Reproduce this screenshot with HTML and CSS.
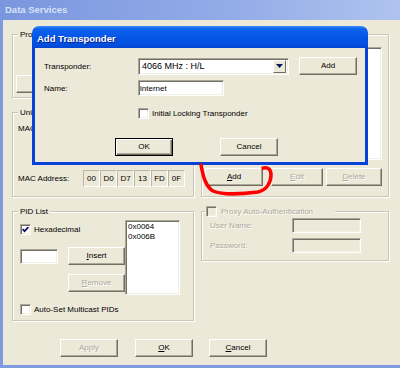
FILE: index.html
```html
<!DOCTYPE html>
<html lang="en">
<head>
  <meta charset="UTF-8">
  <title>Data Services</title>
  <link rel="stylesheet" href="styles.css">
</head>
<body>

<div class="window">
  <div class="titlebar">Data Services</div>

  <div class="frame">
    <div class="groups">
      <div class="col">
        <!-- Proxy server -->
        <div class="group group-proxy">
          <div class="group-title">Proxy</div>
          <button class="btn btn-settings"></button>
        </div>

        <!-- Unicast -->
        <div class="group group-unicast">
          <div class="group-title">Unicast</div>
          <div class="mac-mode">MAC Filter:</div>
          <div class="mac-row">
            <span class="mac-label">MAC Address:</span>
            <div class="mac">
              <span>00</span><span>D0</span><span>D7</span><span>13</span><span>FD</span><span>0F</span>
            </div>
          </div>
        </div>
      </div>

      <!-- Transponder list -->
      <div class="group group-multicast">
        <div class="group-title">Transponders</div>
        <div class="listbox list-tp"></div>
        <div class="btn-row">
          <button class="btn btn-add"><u>A</u>dd</button>
          <button class="btn btn-edit" disabled><u>E</u>dit</button>
          <button class="btn btn-delete" disabled><u>D</u>elete</button>
        </div>
      </div>

      <!-- PID list -->
      <div class="group group-pid">
        <div class="group-title">PID List</div>
        <div class="pid-main">
          <div class="pid-left">
            <div class="check-row hex-row">
              <span class="check checked">
                <svg width="7" height="7" viewBox="0 0 7 7"><path d="M0.6 3.2 L2.6 5.2 L6.4 1.2" stroke="#12125e" stroke-width="1.7" fill="none"/></svg>
              </span>
              <span class="check-text">Hexadecimal</span>
            </div>
            <div class="insert-row">
              <input class="edit pid-edit" type="text" value="">
              <button class="btn btn-insert"><u>I</u>nsert</button>
            </div>
            <button class="btn btn-remove" disabled><u>R</u>emove</button>
          </div>
          <div class="listbox list-pid">
            <div>0x0064</div>
            <div>0x006B</div>
          </div>
        </div>
        <div class="check-row auto-row">
          <span class="check"></span>
          <span class="check-text">Auto-Set Multicast PIDs</span>
        </div>
      </div>

      <!-- Proxy auth -->
      <div class="group group-auth">
        <div class="auth-title">
          <span class="check disabled"></span>
          <span class="muted">Proxy Auto-Authentication</span>
        </div>
        <div class="auth-row auth-user">
          <span class="auth-label muted">User Name:</span>
          <span class="edit edit-off"></span>
        </div>
        <div class="auth-row auth-pass">
          <span class="auth-label muted">Password:</span>
          <span class="edit edit-off"></span>
        </div>
      </div>
    </div>

    <div class="footer">
      <button class="btn" disabled>Apply</button>
      <button class="btn btn-ok"><u>O</u>K</button>
      <button class="btn btn-cancel"><u>C</u>ancel</button>
    </div>
  </div>

  <!-- Modal dialog -->
  <div class="dialog">
    <div class="dialog-title">Add Transponder</div>
    <div class="dialog-body">
      <div class="field">
        <span class="field-label">Transponder:</span>
        <div class="combo">
          <span class="combo-text">4066 MHz : H/L</span>
          <span class="combo-arrow">
            <svg width="7" height="4" viewBox="0 0 7 4"><path d="M0 0 H7 L3.5 4 Z" fill="#0b1a5a"/></svg>
          </span>
        </div>
        <button class="btn btn-tp-add">Add</button>
      </div>
      <div class="field field-name">
        <span class="field-label">Name:</span>
        <input class="edit name-edit" type="text" value="internet">
      </div>
      <div class="field field-check">
        <span class="field-label"></span>
        <span class="check"></span>
        <span class="check-text">Initial Locking Transponder</span>
      </div>
      <div class="dialog-buttons">
        <button class="btn btn-default">OK</button>
        <button class="btn btn-dlg-cancel">Cancel</button>
      </div>
    </div>
  </div>

  <!-- red pen mark -->
  <svg class="scribble" width="400" height="368" viewBox="0 0 400 368">
    <path d="M201 165 C203 175 205 186 213 191 C222 195 243 194 258 192 C267 190 271 182 271 175 C271 169 268 167 263 168" stroke="#ff0000" stroke-width="3.5" fill="none" stroke-linecap="round"/>
  </svg>
</div>

</body>
</html>
```

FILE: styles.css
```css
/* base */
* {
  box-sizing: border-box;
}
body {
  margin: 0;
  font-family: "Liberation Sans", Arial, sans-serif;
  font-size: 8px;
  color: #000;
  background: #ece9d8;
}
button, input {
  font: inherit;
  color: inherit;
}

/* outer window */
.window {
  position: relative;
  width: 400px;
  height: 368px;
  overflow: hidden;
  background: #ece9d8;
}
.titlebar {
  height: 20px;
  padding: 4px 0 0 5px;
  line-height: 12px;
  font-size: 9.5px;
  font-weight: bold;
  color: #d8e2f7;
  background: linear-gradient(to right, #7a96de, #94ade8 60%, #b0c3ef);
}
.frame {
  height: 348px;
  border-left: 3px solid #7f9be0;
  border-bottom: 3px solid #7f9be0;
  padding: 14px 0 0 9px;
}

/* group boxes */
.groups {
  display: grid;
  grid-template-columns: 182px 188px;
  column-gap: 7px;
  row-gap: 14px;
  align-items: start;
}
.col {
  display: flex;
  flex-direction: column;
  gap: 14px;
}
.group {
  border: 1px solid #c9c6b5;
  box-shadow: inset 1px 1px 0 #fff, 1px 1px 0 #fff;
}
.group-title {
  width: fit-content;
  height: 11px;
  line-height: 11px;
  margin: -6px 0 0 5px;
  padding: 0 2px;
  background: #ece9d8;
}
.group-proxy { height: 64px; }
.group-unicast { height: 85px; }
.group-multicast { height: 163px; }
.group-pid { height: 110px; }
.group-auth { height: 50px; }

/* buttons, classic look */
.btn {
  width: 58px;
  height: 18px;
  padding: 0;
  background: #ece9d8;
  border: 1px solid;
  border-color: #fff #716f64 #716f64 #fff;
  box-shadow: inset -1px -1px 0 #aca899;
  line-height: 14px;
}
.btn:disabled {
  color: #aca899;
  text-shadow: 1px 1px 0 #fff;
}
.btn-default {
  border-color: #000;
  box-shadow: inset 1px 1px 0 #fff, inset -1px -1px 0 #716f64, inset -2px -2px 0 #aca899;
}

/* edits, lists, checks */
.edit, .listbox, .combo, .check {
  display: block;
  background: #fff;
  border: 1px solid;
  border-color: #aca899 #fff #fff #aca899;
  box-shadow: inset 1px 1px 0 #716f64, inset -1px -1px 0 #f1efe2;
}
.edit {
  padding: 0 0 0 1px;
  outline: none;
}
.edit-off {
  background: #ece9d8;
}
.check {
  width: 11px;
  height: 11px;
  flex: none;
  display: flex;
  align-items: center;
  justify-content: center;
}
.check.disabled {
  background: #ece9d8;
}
.check-row {
  display: flex;
  align-items: center;
  height: 11px;
}
.check-text {
  margin-left: 3px;
}
.muted {
  color: #aca899;
  text-shadow: 1px 1px 0 #fff;
}

/* proxy server */
.btn-settings {
  width: 75px;
  margin: 35px 0 0 3px;
}

/* unicast */
.mac-mode {
  margin: 5px 0 0 5px;
  line-height: 11px;
}
.mac-row {
  display: flex;
  align-items: center;
  margin: 36px 0 0 5px;
}
.mac-label {
  width: 65px;
}
.mac {
  display: flex;
}
.mac span {
  width: 17px;
  height: 17px;
  line-height: 15px;
  text-align: center;
  border: 1px solid;
  border-color: #b9b6a6 #fff #fff #b9b6a6;
}

/* transponder list */
.list-tp {
  width: 175px;
  height: 113px;
  margin: 7px 0 0 5px;
}
.btn-row {
  display: flex;
  margin-top: 8px;
}
.btn-add { margin-left: 3px; }
.btn-edit { margin-left: 8px; width: 52px; }
.btn-delete { margin-left: 3px; width: 56px; }

/* pid list */
.pid-main {
  display: flex;
  margin-top: 3px;
}
.pid-left {
  width: 112px;
  padding-left: 7px;
}
.hex-row {
  margin-top: 4px;
}
.insert-row {
  display: flex;
  align-items: center;
  margin-top: 12px;
  height: 18px;
}
.pid-edit {
  width: 38px;
  height: 15px;
}
.btn-insert {
  width: 57px;
  margin-left: 10px;
}
.btn-remove {
  display: block;
  width: 57px;
  margin: 9px 0 0 48px;
}
.list-pid {
  width: 55px;
  height: 75px;
  padding: 1px 0 0 2px;
  line-height: 10px;
}
.auto-row {
  margin: 9px 0 0 7px;
}

/* proxy authentication */
.auth-title {
  display: flex;
  align-items: center;
  width: 130px;
  height: 11px;
  margin: -6px 0 0 3px;
  padding-left: 1px;
  background: #ece9d8;
}
.auth-title .muted {
  margin-left: 4px;
}
.auth-row {
  display: flex;
  align-items: center;
  height: 15px;
  padding-left: 8px;
}
.auth-user { margin-top: 1px; }
.auth-pass { margin-top: 5px; }
.auth-label {
  width: 82px;
}
.auth-row .edit {
  width: 69px;
  height: 15px;
}

/* bottom buttons */
.footer {
  display: flex;
  margin: 18px 0 0 48px;
}
.btn-ok { margin-left: 17px; }
.btn-cancel { margin-left: 16px; }

/* add transponder dialog */
.dialog {
  position: absolute;
  left: 32px;
  top: 26px;
  width: 336px;
  height: 139px;
}
.dialog-title {
  height: 22px;
  padding: 7px 0 0 5px;
  line-height: 12px;
  font-size: 9.5px;
  font-weight: bold;
  color: #fff;
  text-shadow: 1px 1px 0 #0a1f8a;
  border-radius: 7px 7px 0 0;
  background: linear-gradient(to bottom, #3b8df9 0, #0d63ee 3px, #0556e6 11px, #0351e0 18px, #0245cf 22px);
}
.dialog-body {
  height: 117px;
  padding: 9px 0 0 9px;
  background: #ece9d8;
  border: 3px solid #0842d6;
  border-top: none;
}
.field {
  display: flex;
  align-items: center;
}
.field-label {
  width: 94px;
  flex: none;
}
.field:first-child {
  height: 18px;
}
.combo {
  display: flex;
  align-items: center;
  justify-content: space-between;
  width: 151px;
  height: 17px;
  padding: 0 0 0 3px;
}
.combo-text {
  font-size: 9px;
}
.combo-arrow {
  display: flex;
  align-items: center;
  justify-content: center;
  width: 13px;
  height: 13px;
  margin-right: 2px;
  background: #ece9d8;
  border: 1px solid;
  border-color: #fff #716f64 #716f64 #fff;
}
.btn-tp-add {
  margin-left: 10px;
}
.field-name {
  margin-top: 5px;
}
.name-edit {
  width: 86px;
  height: 16px;
}
.field-check {
  margin-top: 12px;
  height: 11px;
}
.dialog-buttons {
  display: flex;
  margin: 19px 0 0 71px;
}
.btn-dlg-cancel {
  margin-left: 47px;
}

/* red annotation */
.scribble {
  position: absolute;
  left: 0;
  top: 0;
  pointer-events: none;
}
```
